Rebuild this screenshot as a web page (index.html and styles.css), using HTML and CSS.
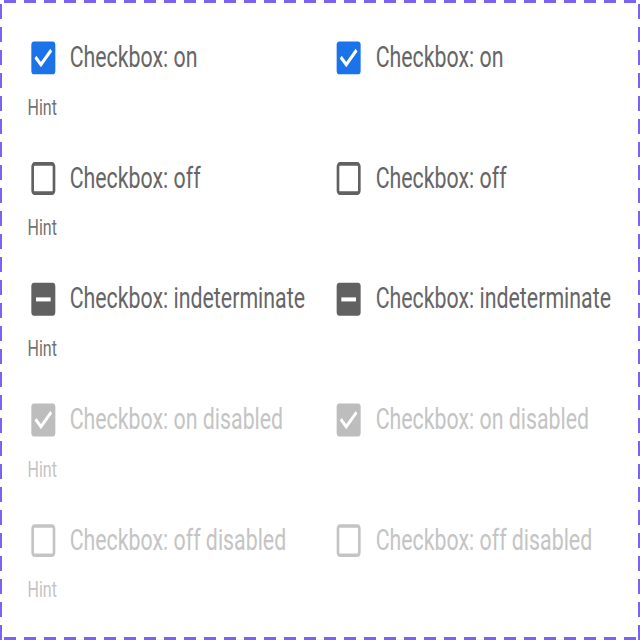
FILE: index.html
```html
<!DOCTYPE html>
<html>
<head>
<meta charset="utf-8">
<link rel="stylesheet" href="styles.css">
</head>
<body>
<div class="frame">
  <div class="stage">
    <div class="grid">
      <div class="item">
        <div class="row">
          <svg class="cb" viewBox="0 0 24 24"><rect x="3" y="3" width="18" height="18" rx="2" class="fill-on"/><path d="M6.8 12.3l3.4 3.4 7-7.2" class="tick"/></svg>
          <span class="label">Checkbox: on</span>
        </div>
        <div class="hint">Hint</div>
      </div>
      <div class="item">
        <div class="row">
          <svg class="cb" viewBox="0 0 24 24"><rect x="3" y="3" width="18" height="18" rx="2" class="fill-on"/><path d="M6.8 12.3l3.4 3.4 7-7.2" class="tick"/></svg>
          <span class="label">Checkbox: on</span>
        </div>
      </div>

      <div class="item">
        <div class="row">
          <svg class="cb" viewBox="0 0 24 24"><rect x="4" y="4" width="16" height="16" rx="1.5" class="box-off"/></svg>
          <span class="label">Checkbox: off</span>
        </div>
        <div class="hint">Hint</div>
      </div>
      <div class="item">
        <div class="row">
          <svg class="cb" viewBox="0 0 24 24"><rect x="4" y="4" width="16" height="16" rx="1.5" class="box-off"/></svg>
          <span class="label">Checkbox: off</span>
        </div>
      </div>

      <div class="item">
        <div class="row">
          <svg class="cb" viewBox="0 0 24 24"><rect x="3" y="3" width="18" height="18" rx="2" class="fill-ind"/><rect x="6.5" y="11" width="11" height="2.2" class="bar"/></svg>
          <span class="label">Checkbox: indeterminate</span>
        </div>
        <div class="hint">Hint</div>
      </div>
      <div class="item">
        <div class="row">
          <svg class="cb" viewBox="0 0 24 24"><rect x="3" y="3" width="18" height="18" rx="2" class="fill-ind"/><rect x="6.5" y="11" width="11" height="2.2" class="bar"/></svg>
          <span class="label">Checkbox: indeterminate</span>
        </div>
      </div>

      <div class="item disabled">
        <div class="row">
          <svg class="cb" viewBox="0 0 24 24"><rect x="3" y="3" width="18" height="18" rx="2" class="fill-dis"/><path d="M6.8 12.3l3.4 3.4 7-7.2" class="tick"/></svg>
          <span class="label">Checkbox: on disabled</span>
        </div>
        <div class="hint">Hint</div>
      </div>
      <div class="item disabled">
        <div class="row">
          <svg class="cb" viewBox="0 0 24 24"><rect x="3" y="3" width="18" height="18" rx="2" class="fill-dis"/><path d="M6.8 12.3l3.4 3.4 7-7.2" class="tick"/></svg>
          <span class="label">Checkbox: on disabled</span>
        </div>
      </div>

      <div class="item disabled">
        <div class="row">
          <svg class="cb" viewBox="0 0 24 24"><rect x="4" y="4" width="16" height="16" rx="1.5" class="box-dis"/></svg>
          <span class="label">Checkbox: off disabled</span>
        </div>
        <div class="hint">Hint</div>
      </div>
      <div class="item disabled">
        <div class="row">
          <svg class="cb" viewBox="0 0 24 24"><rect x="4" y="4" width="16" height="16" rx="1.5" class="box-dis"/></svg>
          <span class="label">Checkbox: off disabled</span>
        </div>
      </div>
    </div>
  </div>
</div>
</body>
</html>
```
FILE: styles.css
```css
html, body {
  margin: 0;
  padding: 0;
  background: #ffffff;
}

.frame {
  width: 640px;
  height: 640px;
  box-sizing: border-box;
  padding: 3px 2px;
  overflow: hidden;
  background-color: #ffffff;
  background-image:
    repeating-linear-gradient(to right, #7a62f2 0 12px, transparent 12px 20px),
    repeating-linear-gradient(to right, #7a62f2 0 12px, transparent 12px 20px),
    repeating-linear-gradient(to bottom, #7a62f2 0 15px, transparent 15px 23px),
    repeating-linear-gradient(to bottom, #7a62f2 0 15px, transparent 15px 23px);
  background-size: 100% 3px, 100% 3px, 2px 100%, 2px 100%;
  background-position: 4px 0, 4px 100%, 0 4px, 100% 4px;
  background-repeat: no-repeat;
}

.stage {
  width: 478px;
  height: 348px;
  transform: scale(1.3333, 1.8286);
  transform-origin: 0 0;
  font-family: Roboto, "Liberation Sans", sans-serif;
}

.grid {
  display: grid;
  grid-template-columns: 210px 210px;
  column-gap: 19.5px;
  row-gap: 19px;
  padding: 18.3px 0 0 18.75px;
}

.item {
  display: flex;
  flex-direction: column;
}

.row {
  display: flex;
  align-items: center;
  height: 24px;
  gap: 8px;
  white-space: nowrap;
}

.cb {
  width: 24px;
  height: 24px;
  flex: none;
}

.label {
  font-size: 16px;
  line-height: 24px;
  color: #666666;
}

.hint {
  margin-top: 7px;
  font-size: 12px;
  line-height: 16px;
  color: #727272;
  padding-left: 0.4px;
}

.fill-on { fill: #1a73e8; }
.fill-ind { fill: #616161; }
.fill-dis { fill: #bdbdbd; }
.tick { fill: none; stroke: #ffffff; stroke-width: 2; stroke-linecap: square; }
.bar { fill: #ffffff; }
.box-off { fill: none; stroke: #616161; stroke-width: 2; }
.box-dis { fill: none; stroke: #c4c4c4; stroke-width: 2; }

.disabled .label,
.disabled .hint {
  color: #c4c4c4;
}
```
